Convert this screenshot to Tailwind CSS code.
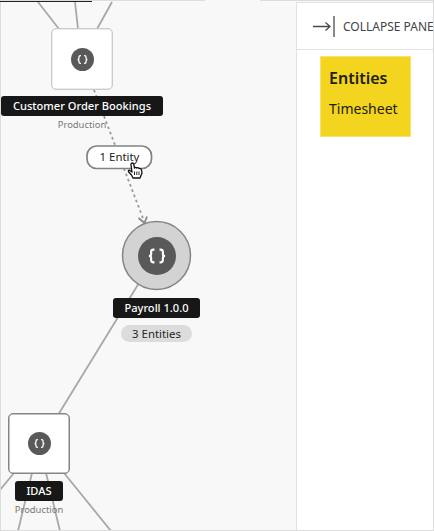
<!DOCTYPE html>
<html lang="en">
<head>
<meta charset="utf-8">
<title>Entity graph</title>
<script src="https://cdn.jsdelivr.net/npm/@tailwindcss/browser@4"></script>
</head>
<body class="w-[434px] h-[531px] overflow-hidden bg-[#f8f8f8] font-['Noto_Sans',sans-serif]">
<svg class="hidden">
  <symbol id="braces" viewBox="0 0 24 24">
    <circle cx="12" cy="12" r="12" fill="#595959"/>
    <path d="M10.400 8H9.800q-1.500 0-1.500 1.300v1.400q0 1.300-1.400 1.300 1.400 0 1.400 1.300v1.400q0 1.300 1.500 1.300h.6M13.600 8h.6q1.500 0 1.500 1.300v1.400q0 1.300 1.400 1.300-1.400 0-1.400 1.300v1.400q0 1.300-1.500 1.300h-.6" fill="none" stroke="#fff" stroke-width="1.350"/>
  </symbol>
</svg>
<div class="relative flex h-full w-full">
  <main class="relative h-full w-[296px] shrink-0 overflow-hidden">
    <svg class="absolute inset-0" width="296" height="531" fill="none" stroke="#a8a8a8" stroke-width="1.8">
      <path d="M38 2L59 29M75 2L78 29M112 2L97 29M139 283L58 415M14 473L0 490M32 473L18 531M46 473L60 531M64 473L111 531"/>
      <path d="M94 90L144 221" stroke="#999" stroke-dasharray="2.6 3"/>
      <path d="M138.500 218L144.500 223L147 216.500" stroke="#888" stroke-width="1.8"/>
    </svg>

    <div class="absolute left-[51px] top-[28px] flex h-[62px] w-[62px] items-center justify-center rounded-[5px] border border-[#cbcbcb] bg-white shadow-[inset_0_0_0_0.5px_#d8d8d8]">
      <svg class="size-[23px]"><use href="#braces"/></svg>
    </div>
    <div class="absolute left-[1px] top-[96px] flex h-5 w-[162px] items-center justify-center rounded-[3px] bg-[#171717] text-[11.1px] font-medium whitespace-nowrap text-white"><span>Customer Order Bookings</span></div>
    <div class="absolute left-[42px] top-[118px] w-20 text-center text-[9.4px] leading-[14px] text-[#777]">Production</div>

    <svg class="absolute left-[86px] top-[145px]" width="67" height="25"><rect x="1" y="1" width="64.500" height="22.500" rx="9.500" fill="#fff" stroke="#828282" stroke-width="1.700"/></svg>
    <div class="absolute left-[86px] top-[145px] flex h-[24px] w-[67px] items-center justify-center text-[11.4px] whitespace-nowrap text-[#222]">1 Entity</div>
    <svg class="absolute left-[127px] top-[162px]" width="17" height="18" viewBox="0 0 17 18">
      <path d="M5 10L4 3Q3.800 1 5.300 1 6.400 1 6.800 2.500L7.500 6Q8.500 4.700 9.800 6 11 5 12 6.500 14 6 14.500 8L15 11 13 16H6L4.500 13 1.500 9.800Q1 8.300 2.500 8.200Z" fill="#fff" stroke="#111" stroke-width="1.3" stroke-linejoin="round"/>
      <path d="M7.500 9.500V13M9.800 9.500V13M12 9.500V13" stroke="#222"/>
    </svg>

    <svg class="absolute left-[121px] top-[220px]" width="71" height="71"><circle cx="35.500" cy="35.500" r="34" fill="#d3d3d3" stroke="#858585" stroke-width="1.500"/></svg>
    <div class="absolute left-[122px] top-[221px] flex size-[69px] items-center justify-center">
      <svg class="size-[38px]"><use href="#braces"/></svg>
    </div>
    <div class="absolute left-[113px] top-[298px] flex h-5 w-[87px] items-center justify-center rounded-[3px] bg-[#171717] text-[11.1px] font-medium whitespace-nowrap text-white">Payroll 1.0.0</div>
    <div class="absolute left-[121px] top-[325px] flex h-[17px] w-[71px] items-center justify-center rounded-full bg-[#dcdcdc] text-[11.4px] whitespace-nowrap text-[#252525]">3 Entities</div>

    <div class="absolute left-[8px] top-[413px] flex h-[61px] w-[62px] items-center justify-center rounded-[5px] border border-[#858585] bg-white shadow-[inset_0_0_0_0.5px_#858585]">
      <svg class="size-[23px]"><use href="#braces"/></svg>
    </div>
    <div class="absolute left-[15px] top-[481px] flex h-5 w-12 items-center justify-center rounded-[3px] bg-[#171717] text-[11.1px] font-medium text-white">IDAS</div>
    <div class="absolute left-[-1px] top-[503px] w-20 text-center text-[9.4px] leading-[14px] text-[#777]">Production</div>
  </main>

  <aside class="mt-[2px] flex min-w-0 flex-1 flex-col overflow-hidden border-l border-t border-[#e2e2e2] bg-white">
    <header class="flex h-[47px] shrink-0 items-center gap-[8px] border-b border-[#e2e2e2] pt-[2px] pl-[16px] text-[12px] whitespace-nowrap text-[#444]">
      <svg class="shrink-0" width="22" height="22" viewBox="0 0 22 22" fill="none" stroke="#4a4a4a" stroke-width="1.3"><path d="M0 10.500H17M12.500 6.500L17 10.500L12.500 14.500M21 0V21"/></svg>
      <span>COLLAPSE PANEL</span>
    </header>
    <section class="mt-[6px] ml-[23px] flex h-[81px] w-[91px] shrink-0 flex-col border border-[#f7e36a] bg-[#f3d41f] pt-[10px] pl-[8px] whitespace-nowrap text-[#222110]">
      <h2 class="text-[16px] leading-[22px] font-semibold">Entities</h2>
      <p class="mt-[10px] text-[14px] leading-5">Timesheet</p>
    </section>
  </aside>
  <div class="pointer-events-none absolute inset-0 border border-[#dcdcdc] border-t-transparent"></div>
  <div class="absolute top-0 left-0 flex h-[2px] w-full">
    <div class="w-[92px] border-t border-[#dcdcdc] bg-[#222]"></div>
    <div class="h-px w-[113px] bg-[#dedede]"></div>
    <div class="w-[55px] bg-[#f8f8f8]"></div>
    <div class="h-px flex-1 bg-[#dcdcdc]"></div>
  </div>
</div>
</body>
</html>
